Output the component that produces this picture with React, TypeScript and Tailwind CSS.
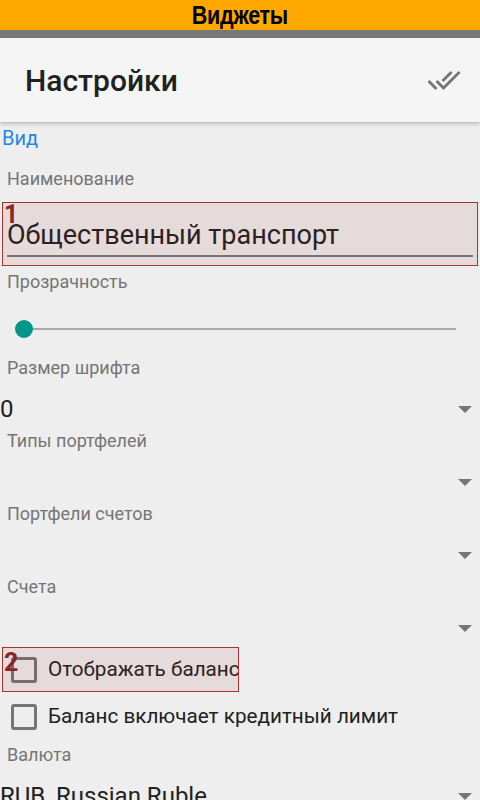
import React from "react";

const Tri = () => (
  <div className="w-0 h-0 border-l-[7px] border-r-[7px] border-t-[7px] border-l-transparent border-r-transparent border-t-[#757575]" />
);

const Label = ({ children, h }: { children: React.ReactNode; h: string }) => (
  <div className={`${h} flex items-center pl-[7px] text-[18px] text-[#757575]`}>{children}</div>
);

const Dropdown = ({ label, value }: { label: string; value?: string }) => (
  <div className="flex flex-col">
    <div className="h-[26px] flex items-center pl-[7px] text-[18px] text-[#757575]">{label}</div>
    <div className="h-[47px] pt-[11px]">
      <div className="h-[36px] flex items-center justify-between pr-[8px]">
        <span className="text-[24px] text-[#212121]">{value ?? ""}</span>
        <Tri />
      </div>
    </div>
  </div>
);

const Checkbox = () => (
  <div className="w-[26px] h-[26px] border-[3px] border-[#757575] rounded-[3px]" />
);

export default function App() {
  return (
    <div className="w-[480px] h-[800px] overflow-hidden bg-[#eeeeee] flex flex-col" style={{ fontFamily: "Roboto, 'Noto Sans', sans-serif" }}>
      <div className="h-[30px] bg-[#ffa800] flex items-center justify-center shrink-0">
        <span className="inline-block scale-x-[0.86] text-[25px] leading-[30px] font-bold text-black tracking-[-0.3px]" style={{ fontFamily: "'Liberation Sans Narrow', 'Liberation Sans', sans-serif" }}>Виджеты</span>
      </div>
      <div className="h-[8px] bg-[#777777] shrink-0" />
      <div className="relative z-10 h-[84px] shrink-0 bg-[#f5f5f5] flex items-center justify-between pl-[25px] pr-[19px] shadow-[0_2px_4px_rgba(0,0,0,0.22)]">
        <span className="text-[30px] font-medium text-[#212121]">Настройки</span>
        <svg width="34" height="34" viewBox="0 0 24 24" fill="#757575">
          <path d="M18 7l-1.41-1.41-6.34 6.34 1.41 1.41L18 7zm4.24-1.41L11.66 16.17 7.48 12l-1.41 1.41L11.66 19l12-12-1.42-1.41zM.41 13.41L6 19l1.41-1.41L1.83 12 .41 13.41z" />
        </svg>
      </div>
      <div className="flex flex-col">
        <div className="h-[32px] flex items-center pl-[2px] text-[20px] text-[#1e88e5]">Вид</div>
        <Label h="h-[48px]">Наименование</Label>
        <div className="relative h-[64px]">
          <div className="pl-[7px] pr-[7px] pt-[13px]">
            <div className="h-[40px] flex items-center text-[27px] text-[#212121]">Общественный транспорт</div>
            <div className="h-[2px] bg-[#7a7a7a]" />
          </div>
          <div className="absolute left-[2px] right-[2px] top-0 bottom-0 border border-[#a83232] bg-[rgba(160,32,32,0.09)]">
            <span className="absolute left-[1px] top-[-2px] text-[25px] font-bold leading-[28px] text-[#8b2626]">1</span>
          </div>
        </div>
        <Label h="h-[31px]">Прозрачность</Label>
        <div className="h-[57px] pt-[23px] pl-[15px] pr-[24px] flex items-start">
          <div className="w-[18px] h-[18px] rounded-full bg-[#009688] shrink-0" />
          <div className="flex-1 h-[2px] bg-[#aaaaaa] mt-[8px]" />
        </div>
        <Dropdown label="Размер шрифта" value="0" />
        <Dropdown label="Типы портфелей" />
        <Dropdown label="Портфели счетов" />
        <Dropdown label="Счета" />
        <div className="relative h-[45px] mt-[1px] flex items-center pl-[11px] gap-[11px]">
          <Checkbox />
          <span className="text-[20.7px] text-[#212121]">Отображать баланс</span>
          <div className="absolute left-[2px] w-[237px] top-0 bottom-0 border border-[#a83232] bg-[rgba(160,32,32,0.09)]">
            <span className="absolute left-[1px] top-[1px] text-[25px] font-bold leading-[28px] text-[#8b2626]">2</span>
          </div>
        </div>
        <div className="h-[50px] flex items-center pl-[11px] gap-[11px]">
          <Checkbox />
          <span className="text-[20.7px] text-[#212121]">Баланс включает кредитный лимит</span>
        </div>
        <Label h="h-[25px]">Валюта</Label>
        <div className="h-[47px] pt-[11px]">
          <div className="h-[36px] flex items-center justify-between pr-[8px]">
            <span className="text-[24px] text-[#212121]">RUB, Russian Ruble</span>
            <Tri />
          </div>
        </div>
      </div>
    </div>
  );
}
